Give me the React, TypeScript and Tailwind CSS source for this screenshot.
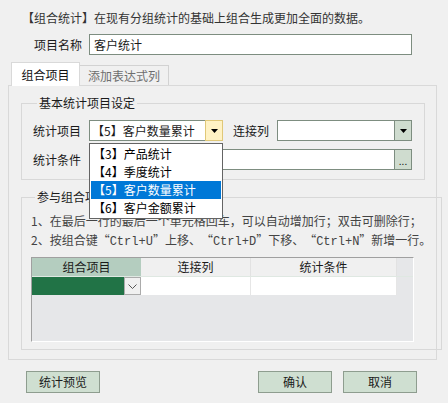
import React from "react";

const font = { fontFamily: '"Noto Sans CJK SC", "Noto Sans", sans-serif' };

function Arrow() {
  return (
    <svg width="7" height="4" viewBox="0 0 7 4">
      <path d="M0 0 H7 L3.5 4 Z" fill="#000" />
    </svg>
  );
}

function Chevron() {
  return (
    <svg width="9" height="5" viewBox="0 0 9 5">
      <path d="M0.5 0.5 L4.5 4.5 L8.5 0.5" fill="none" stroke="#555" strokeWidth="1" />
    </svg>
  );
}

function Key({ k }: { k: string }) {
  return (
    <span>
      <span className="inline-block w-[12px] text-right">“</span>
      <span className="font-['Liberation_Mono',monospace] text-[12px]">{k}</span>
      <span className="inline-block w-[12px] text-left">”</span>
    </span>
  );
}

export default function App() {
  const items = ["【3】产品统计", "【4】季度统计", "【5】客户数量累计", "【6】客户金额累计"];
  return (
    <div
      className="w-[448px] h-[403px] bg-[#f0f0f0] text-[12px] leading-[16px] text-[#1a1a1a] overflow-hidden"
      style={font}
    >
      {/* header */}
      <div className="pt-[10px] pl-[22px] text-[#333] whitespace-nowrap">
        【组合统计】在现有分组统计的基础上组合生成更加全面的数据。
      </div>
      <div className="mt-[8px] flex items-center">
        <div className="w-[82px] text-right whitespace-nowrap">项目名称</div>
        <div className="ml-[7px] w-[323px] h-[21px] border border-[#7d8d80] bg-white flex items-center pl-[4px]">
          客户统计
        </div>
      </div>

      {/* tabs */}
      <div className="mt-[7px] ml-[8px] w-[429px]">
        <div className="flex items-end h-[23px] pl-[3px] relative z-10">
          <div className="w-[69px] h-[24px] mb-[-1px] bg-white border border-b-0 border-[#d9d9d9] flex items-center justify-center text-[#111] whitespace-nowrap">
            组合项目
          </div>
          <div className="w-[89px] h-[20px] bg-[#f0f0f0] border border-b-0 border-l-0 border-[#d2d2d2] flex items-center justify-center text-[#6e6e6e] whitespace-nowrap">
            添加表达式列
          </div>
        </div>
        <div className="h-[275px] border border-[#d9d9d9] bg-[#f0f0f0] pt-[9px] pl-[12px] pr-[11px]">
          {/* group 1 */}
          <fieldset className="border border-[#d8d8d8] h-[85px] pl-[11px]">
            <legend className="ml-[4px] px-[2px] leading-[16px] whitespace-nowrap">基本统计项目设定</legend>
            <div className="mt-[9px] flex items-center h-[21px]">
              <div className="w-[48px] shrink-0 whitespace-nowrap">统计项目</div>
              <div className="ml-[8px] relative w-[134px] shrink-0 h-[21px] flex">
                <div className="flex-1 h-full border border-r-0 border-[#7d8d80] bg-white flex items-center pl-[2px] whitespace-nowrap">
                  【5】客户数量累计
                </div>
                <div className="w-[18px] h-full border border-[#e0c878] bg-[#fff2c4] flex items-center justify-center">
                  <Arrow />
                </div>
                {/* dropdown */}
                <div className="absolute left-0 top-[23px] w-[134px] border border-[#646464] bg-white p-[1px] z-20">
                  {items.map((t, i) => (
                    <div
                      key={t}
                      className={
                        "h-[18px] flex items-center pl-[2px] whitespace-nowrap " +
                        (i === 2 ? "bg-[#0078d7] text-white" : "text-black")
                      }
                    >
                      {t}
                    </div>
                  ))}
                </div>
              </div>
              <div className="ml-[10px] w-[36px] shrink-0 whitespace-nowrap">连接列</div>
              <div className="ml-[8px] w-[135px] shrink-0 h-[21px] flex">
                <div className="flex-1 h-full border border-r-0 border-[#7d8d80] bg-white" />
                <div className="w-[18px] h-full border border-[#7d8d80] bg-[#cfdccf] flex items-center justify-center">
                  <Arrow />
                </div>
              </div>
            </div>
            <div className="mt-[8px] flex items-center h-[21px]">
              <div className="w-[48px] shrink-0 whitespace-nowrap">统计条件</div>
              <div className="ml-[8px] w-[323px] shrink-0 h-[21px] flex">
                <div className="flex-1 h-full border border-r-0 border-[#7d8d80] bg-white" />
                <div className="w-[18px] h-full border border-[#7d8d80] bg-[#cfdccf] flex items-end justify-center text-[10px] leading-[12px] pb-[2px]">
                  ...
                </div>
              </div>
            </div>
          </fieldset>

          {/* group 2 */}
          <fieldset className="mt-[9px] border border-[#d8d8d8] h-[161px] pl-[9px] pr-[10px]">
            <legend className="ml-[4px] px-[2px] leading-[16px] whitespace-nowrap">参与组合项目</legend>
            <div className="pt-[8px] text-[#444] whitespace-nowrap overflow-hidden">
              <div className="h-[19px] leading-[16px]">1、在最后一行的最后一个单元格回车，可以自动增加行；双击可删除行；</div>
              <div className="h-[19px] leading-[16px]">
                2、按组合键<Key k="Ctrl+U" />上移、<Key k="Ctrl+D" />下移、<Key k="Ctrl+N" />新增一行。
              </div>
            </div>
            <div className="mt-[6px] w-[383px] h-[85px] border-t border-l border-[#a0a0a0] border-r border-r-white border-b border-b-white bg-[#e6e7e9]">
              <div className="flex h-[18px]">
                <div className="w-[109px] bg-[#b4cdbf] flex items-center justify-center">组合项目</div>
                <div className="w-[110px] bg-[#f0f0f0] border-r border-[#e2e2e2] flex items-center justify-center">连接列</div>
                <div className="w-[146px] bg-[#f0f0f0] border-r border-[#e2e2e2] flex items-center justify-center">统计条件</div>
              </div>
              <div className="flex h-[19px] border-t border-[#dfe8e2]">
                <div className="w-[109px] bg-[#217346] flex justify-end">
                  <div className="w-[17px] h-full bg-[#f0f0f0] border border-[#ababab] flex items-center justify-center">
                    <Chevron />
                  </div>
                </div>
                <div className="w-[110px] bg-white border-r border-[#e6e6e6]" />
                <div className="w-[146px] bg-white border-r border-[#e6e6e6]" />
              </div>
            </div>
          </fieldset>
        </div>
      </div>

      {/* buttons */}
      <div className="mt-[11px] flex">
        <div className="ml-[26px] w-[74px] h-[22px] border border-[#8e9d8f] bg-[#cfdfd1] flex items-center justify-center">
          统计预览
        </div>
        <div className="ml-[158px] w-[74px] h-[22px] border border-[#8e9d8f] bg-[#cfdfd1] flex items-center justify-center">
          确认
        </div>
        <div className="ml-[11px] w-[74px] h-[22px] border border-[#8e9d8f] bg-[#cfdfd1] flex items-center justify-center">
          取消
        </div>
      </div>
    </div>
  );
}
